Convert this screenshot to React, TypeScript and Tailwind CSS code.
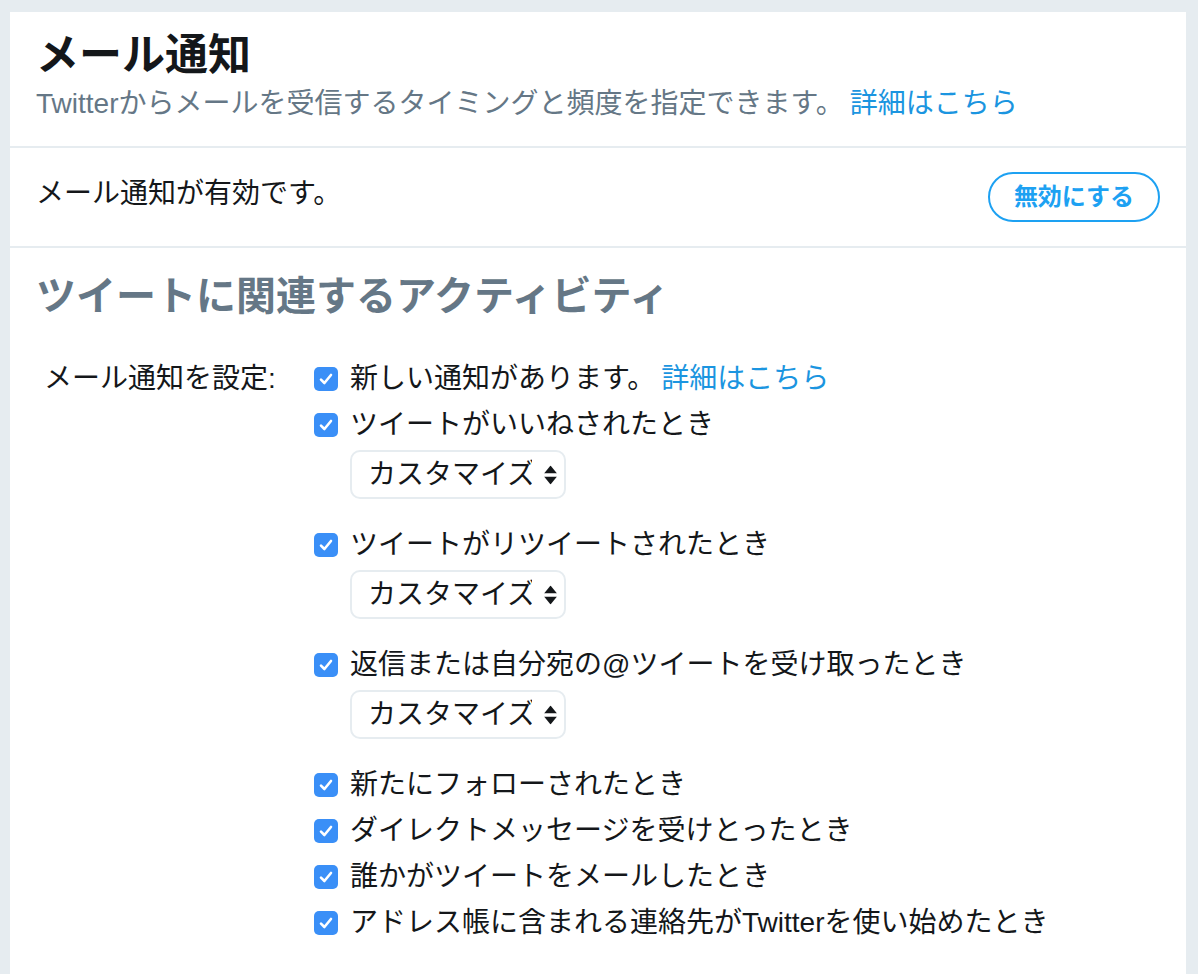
import { ChangeEvent, useState } from 'react'

const font = { fontFamily: '"Liberation Sans", "Noto Sans CJK JP", sans-serif' }

type Item = { id: string; label: string; link?: boolean; select?: boolean }

const items: Item[] = [
  { id: 'notif', label: '新しい通知があります。', link: true },
  { id: 'fav', label: 'ツイートがいいねされたとき', select: true },
  { id: 'rt', label: 'ツイートがリツイートされたとき', select: true },
  { id: 'reply', label: '返信または自分宛の@ツイートを受け取ったとき', select: true },
  { id: 'follow', label: '新たにフォローされたとき' },
  { id: 'dm', label: 'ダイレクトメッセージを受けとったとき' },
  { id: 'share', label: '誰かがツイートをメールしたとき' },
  { id: 'contact', label: 'アドレス帳に含まれる連絡先がTwitterを使い始めたとき' },
]

function Check({ on, onClick }: { on: boolean; onClick: () => void }) {
  return (
    <button
      onClick={onClick}
      className={`w-6 h-6 rounded-[5px] flex items-center justify-center shrink-0 ${on ? 'bg-[#3a8ff7]' : 'bg-white border border-[#b8c2cc]'}`}
    >
      {on && (
        <svg width="16" height="16" viewBox="0 0 16 16" fill="none">
          <path d="M3 8.6 L6.4 12 L13 4" stroke="white" strokeWidth="2.6" strokeLinecap="round" strokeLinejoin="round" />
        </svg>
      )}
    </button>
  )
}

function Customize() {
  const [val, setVal] = useState('custom')
  return (
    <div className="relative w-[216px] h-[49px] mt-[2px] mb-[23px] border-2 border-[#e6ecf0] rounded-[10px] bg-white">
      <select
        value={val}
        onChange={(e: ChangeEvent<HTMLSelectElement>) => setVal(e.target.value)}
        className="appearance-none w-full h-full bg-transparent pl-[16px] pr-8 text-[28px] text-[#14171a] outline-none"
        style={font}
      >
        <option value="custom">カスタマイズ</option>
        <option value="all">すべて</option>
        <option value="off">オフ</option>
      </select>
      <div className="absolute right-[7px] top-1/2 -translate-y-1/2 flex flex-col items-center gap-[3px] pointer-events-none">
        <svg width="13" height="8" viewBox="0 0 13 8"><path d="M6.5 0 L13 8 L0 8 Z" fill="#14171a" /></svg>
        <svg width="13" height="8" viewBox="0 0 13 8"><path d="M0 0 L13 0 L6.5 8 Z" fill="#14171a" /></svg>
      </div>
    </div>
  )
}

export default function App() {
  const [enabled, setEnabled] = useState(true)
  const [checked, setChecked] = useState<Record<string, boolean>>(
    Object.fromEntries(items.map(i => [i.id, true]))
  )

  const toggle = (id: string) => setChecked(c => ({ ...c, [id]: !c[id] }))

  return (
    <div className="min-h-screen bg-[#e6ecf0] pl-[10px] pr-[12px] pt-[12px]" style={font}>
      <div className="bg-white min-h-[962px]">
        <div className="px-[26px] pt-[17px] pb-[22px] border-b-2 border-[#e6ecf0]">
          <h1 className="text-[43px] leading-[52px] font-bold text-[#14171a]">メール通知</h1>
          <p className="text-[28px] leading-[40px] text-[#657786] mt-[3px]">
            Twitterからメールを受信するタイミングと頻度を指定できます。
            <a href="#" className="text-[#1b95e0] ml-[6px]">詳細はこちら</a>
          </p>
        </div>

        <div className="px-[26px] pt-[24px] pb-[24px] border-b-2 border-[#e6ecf0] flex items-start justify-between">
          <p className="text-[28px] leading-[40px] text-[#14171a] pt-[2px]">
            {enabled ? 'メール通知が有効です。' : 'メール通知が無効です。'}
          </p>
          <button
            onClick={() => setEnabled(!enabled)}
            className="h-[50px] w-[172px] rounded-full border-2 border-[#1da1f2] text-[#1da1f2] text-[24px] font-bold"
          >
            {enabled ? '無効にする' : '有効にする'}
          </button>
        </div>

        <div className="px-[26px] pt-[24px]">
          <h2 className="text-[40px] leading-[48px] font-bold text-[#657786]">ツイートに関連するアクティビティ</h2>
          <div className="flex mt-[36px]">
            <div className="w-[278px] pl-[8px] text-[28px] leading-[46px] text-[#14171a] shrink-0">メール通知を設定:</div>
            <div className="flex flex-col">
              {items.map(item => (
                <div key={item.id}>
                  <div className="flex items-center h-[46px] gap-[12px]">
                    <Check on={checked[item.id]} onClick={() => toggle(item.id)} />
                    <span className="text-[28px] text-[#14171a] whitespace-nowrap">
                      {item.label}
                      {item.link && <a href="#" className="text-[#1b95e0] ml-[6px]">詳細はこちら</a>}
                    </span>
                  </div>
                  {item.select && (
                    <div className="pl-[36px]">
                      <Customize />
                    </div>
                  )}
                </div>
              ))}
            </div>
          </div>
        </div>
      </div>
    </div>
  )
}
